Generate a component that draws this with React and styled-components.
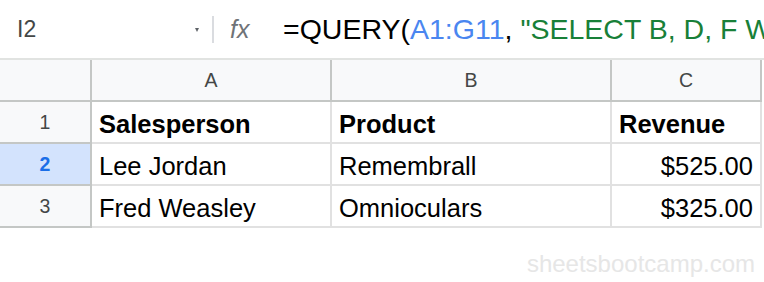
import React from "react";
import styled, { createGlobalStyle } from "styled-components";

const GlobalStyle = createGlobalStyle`
  html, body {
    margin: 0;
    padding: 0;
    background: #ffffff;
  }
  body {
    font-family: "Liberation Sans", Arial, sans-serif;
    width: 764px;
    height: 282px;
    overflow: hidden;
  }
`;

const Page = styled.div`
  display: flex;
  flex-direction: column;
  width: 764px;
`;

const FormulaBar = styled.div`
  display: flex;
  align-items: center;
  height: 58px;
  border-bottom: 2px solid #e1e3e1;
`;

const NameBox = styled.div`
  display: flex;
  align-items: center;
  justify-content: space-between;
  width: 212px;
  box-sizing: border-box;
  padding: 0 13px 0 17px;
  font-size: 23px;
  color: #444746;
`;

const Caret = styled.span`
  width: 0;
  height: 0;
  border-left: 2.5px solid transparent;
  border-right: 2.5px solid transparent;
  border-top: 4px solid #5f6368;
  margin-top: 2px;
`;

const Divider = styled.div`
  width: 2px;
  height: 27px;
  background: #dadce0;
`;

const FxLabel = styled.div`
  width: 69px;
  box-sizing: border-box;
  padding-left: 16px;
  font-size: 25px;
  font-style: italic;
  color: #6f7377;
`;

const FormulaText = styled.div`
  flex: 1;
  overflow: hidden;
  white-space: nowrap;
  font-size: 28.5px;
  color: #000000;
  margin-top: 1px;
`;

const Token = styled.span`
  color: ${(p) => p.$color};
`;

const Grid = styled.div`
  display: grid;
  grid-template-columns: 92px 240px 280px 150px;
  grid-auto-rows: 42px;
`;

const ColHeader = styled.div`
  display: flex;
  align-items: center;
  justify-content: center;
  background: #f8f9fa;
  border-right: 2px solid #c4c7c5;
  border-bottom: 2px solid #c4c7c5;
  font-size: 19.5px;
  color: #444746;
`;

const RowHeader = styled.div`
  display: flex;
  align-items: center;
  justify-content: center;
  background: ${(p) => (p.$active ? "#d3e3fd" : "#f8f9fa")};
  border-right: 2px solid #c4c7c5;
  border-bottom: 2px solid #c4c7c5;
  font-size: 19.5px;
  font-weight: ${(p) => (p.$active ? 700 : 400)};
  color: ${(p) => (p.$active ? "#1a6ee8" : "#444746")};
`;

const Cell = styled.div`
  display: flex;
  align-items: flex-end;
  justify-content: ${(p) => (p.$right ? "flex-end" : "flex-start")};
  padding: 0 7px 3px 7px;
  border-right: 2px solid #e1e1e1;
  border-bottom: 2px solid #e1e1e1;
  font-size: 25.5px;
  font-weight: ${(p) => (p.$bold ? 700 : 400)};
  color: #000000;
  white-space: nowrap;
  overflow: hidden;
`;

const Watermark = styled.div`
  margin-top: 22px;
  padding-right: 9px;
  text-align: right;
  font-size: 24px;
  color: #e6e6e6;
`;

const rows = [
  { n: 1, cells: ["Salesperson", "Product", "Revenue"], bold: true },
  { n: 2, cells: ["Lee Jordan", "Remembrall", "$525.00"], active: true },
  { n: 3, cells: ["Fred Weasley", "Omnioculars", "$325.00"] },
];

export default function App() {
  return (
    <Page>
      <GlobalStyle />
      <FormulaBar>
        <NameBox>
          <span>I2</span>
          <Caret />
        </NameBox>
        <Divider />
        <FxLabel>fx</FxLabel>
        <FormulaText>
          =QUERY(<Token $color="#4a86f0">A1:G11</Token>,{" "}
          <Token $color="#188038">"SELECT B, D, F WHERE C = 'Yes'"</Token>)
        </FormulaText>
      </FormulaBar>
      <Grid>
        <ColHeader />
        <ColHeader>A</ColHeader>
        <ColHeader>B</ColHeader>
        <ColHeader>C</ColHeader>
        {rows.map((r) => (
          <React.Fragment key={r.n}>
            <RowHeader $active={r.active}>{r.n}</RowHeader>
            <Cell $bold={r.bold}>{r.cells[0]}</Cell>
            <Cell $bold={r.bold}>{r.cells[1]}</Cell>
            <Cell $bold={r.bold} $right={!r.bold}>
              {r.cells[2]}
            </Cell>
          </React.Fragment>
        ))}
      </Grid>
      <Watermark>sheetsbootcamp.com</Watermark>
    </Page>
  );
}
